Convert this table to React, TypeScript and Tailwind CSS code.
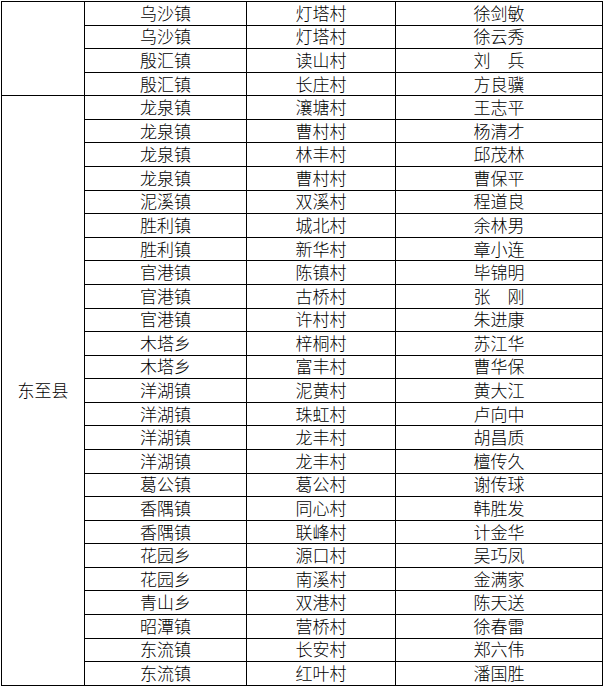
type Row = [string, string, string];

const upperRows: Row[] = [
  ['乌沙镇', '灯塔村', '徐剑敏'],
  ['乌沙镇', '灯塔村', '徐云秀'],
  ['殷汇镇', '读山村', '刘　兵'],
  ['殷汇镇', '长庄村', '方良骥'],
];

const dongzhiRows: Row[] = [
  ['龙泉镇', '瀼塘村', '王志平'],
  ['龙泉镇', '曹村村', '杨清才'],
  ['龙泉镇', '林丰村', '邱茂林'],
  ['龙泉镇', '曹村村', '曹保平'],
  ['泥溪镇', '双溪村', '程道良'],
  ['胜利镇', '城北村', '余林男'],
  ['胜利镇', '新华村', '章小连'],
  ['官港镇', '陈镇村', '毕锦明'],
  ['官港镇', '古桥村', '张　刚'],
  ['官港镇', '许村村', '朱进康'],
  ['木塔乡', '梓桐村', '苏江华'],
  ['木塔乡', '富丰村', '曹华保'],
  ['洋湖镇', '泥黄村', '黄大江'],
  ['洋湖镇', '珠虹村', '卢向中'],
  ['洋湖镇', '龙丰村', '胡昌质'],
  ['洋湖镇', '龙丰村', '檀传久'],
  ['葛公镇', '葛公村', '谢传球'],
  ['香隅镇', '同心村', '韩胜发'],
  ['香隅镇', '联峰村', '计金华'],
  ['花园乡', '源口村', '吴巧凤'],
  ['花园乡', '南溪村', '金满家'],
  ['青山乡', '双港村', '陈天送'],
  ['昭潭镇', '营桥村', '徐春雷'],
  ['东流镇', '长安村', '郑六伟'],
  ['东流镇', '红叶村', '潘国胜'],
];

const cell = 'flex items-center justify-center border-r border-b border-black pb-[2px]';

function Group({ county, rows }: { county: string; rows: Row[] }) {
  return (
    <>
      <div className={cell} style={{ gridRow: `span ${rows.length}` }}>
        {county}
      </div>
      {rows.map((r, i) => (
        <div key={i} className="contents">
          <div className={cell}>{r[0]}</div>
          <div className={cell}>{r[1]}</div>
          <div className={cell}>{r[2]}</div>
        </div>
      ))}
    </>
  );
}

export default function App() {
  return (
    <div className="w-[605px] h-[688px] bg-white overflow-hidden pl-px pt-px">
      <div
        className="grid grid-cols-[83px_162px_149px_207px] auto-rows-[23.58px] w-[602px] border-l border-t border-black text-black text-[17px] leading-none"
        style={{ fontFamily: '"Noto Sans CJK SC", "Noto Sans", sans-serif', fontWeight: 300 }}
      >
        <Group county="" rows={upperRows} />
        <Group county="东至县" rows={dongzhiRows} />
      </div>
    </div>
  );
}
